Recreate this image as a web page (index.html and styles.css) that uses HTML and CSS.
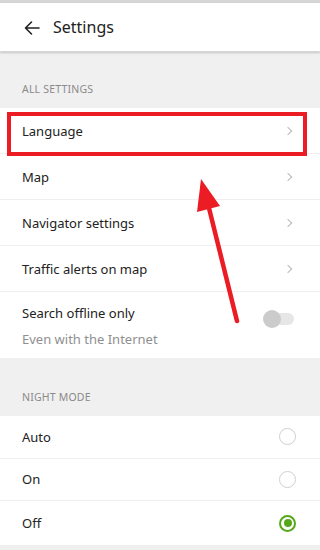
FILE: index.html
```html
<!DOCTYPE html>
<html>
<head>
<meta charset="utf-8">
<link rel="stylesheet" href="styles.css">
</head>
<body>
<div class="screen">
  <header class="topbar">
    <svg class="back" width="18" height="16" viewBox="0 0 18 16"><path d="M16 8H2.5M8.5 2L2.5 8l6 6" fill="none" stroke="#222" stroke-width="1.6" stroke-linecap="round" stroke-linejoin="round"/></svg>
    <span class="title">Settings</span>
  </header>

  <div class="section-head first">ALL SETTINGS</div>
  <div class="group">
    <div class="row"><span>Language</span><i class="chev"></i></div>
    <div class="row"><span>Map</span><i class="chev"></i></div>
    <div class="row"><span>Navigator settings</span><i class="chev"></i></div>
    <div class="row"><span>Traffic alerts on map</span><i class="chev"></i></div>
    <div class="row tall">
      <div class="texts">
        <span>Search offline only</span>
        <span class="sub">Even with the Internet</span>
      </div>
      <div class="toggle"><div class="knob"></div></div>
    </div>
  </div>

  <div class="section-head second">NIGHT MODE</div>
  <div class="group">
    <div class="row radio-row"><span>Auto</span><i class="radio"></i></div>
    <div class="row radio-row"><span>On</span><i class="radio"></i></div>
    <div class="row radio-row last"><span>Off</span><i class="radio on"></i></div>
  </div>

  <div class="highlight"></div>
  <svg class="arrow" width="320" height="550" viewBox="0 0 320 550">
    <line x1="237" y1="321" x2="207" y2="200" stroke="#ec1c24" stroke-width="4.5" stroke-linecap="round"/>
    <polygon points="201,179 197,212 220,206" fill="#ec1c24"/>
  </svg>
</div>
</body>
</html>
```
FILE: styles.css
```css
* { box-sizing: border-box; }
html, body { margin: 0; padding: 0; }
body {
  width: 320px;
  height: 550px;
  overflow: hidden;
  background: #f0f0f0;
  font-family: "Noto Sans", "Open Sans", sans-serif;
  color: #222;
}
.screen {
  position: relative;
  width: 320px;
  height: 550px;
  border-top: 3px solid #d6d6d6;
}
.topbar {
  height: 49px;
  background: #fff;
  display: flex;
  align-items: center;
  padding-left: 23px;
  box-shadow: 0 1px 2px rgba(0,0,0,0.18);
  border-bottom: 1px solid #d8d8d8;
  position: relative;
  z-index: 1;
}
.back { margin-right: 12px; margin-top: 2px; }
.title { font-size: 16px; color: #222; }
.section-head {
  font-size: 10.5px;
  color: #8a8a8a;
  letter-spacing: 0.2px;
  padding-left: 22px;
  display: flex;
  align-items: flex-end;
}
.section-head.first { height: 56px; padding-bottom: 12px; }
.section-head.second { height: 58px; padding-bottom: 12px; }
.group { background: #fff; }
.row {
  height: 46px;
  display: flex;
  align-items: center;
  justify-content: space-between;
  padding: 0 27px 0 22px;
  font-size: 13px;
  border-bottom: 1px solid #efefef;
}
.row.tall {
  height: 66px;
  align-items: flex-start;
  padding-top: 12px;
  border-bottom: none;
}
.texts { display: flex; flex-direction: column; }
.sub { color: #8f8f8f; margin-top: 8px; }
.chev {
  width: 6px; height: 6px;
  border-top: 1.3px solid #b8b8b8;
  border-right: 1.3px solid #b8b8b8;
  transform: rotate(45deg);
  margin-right: 2px;
}
.toggle {
  margin-top: 9px;
  width: 30px;
  height: 12px;
  border-radius: 6px;
  background: #e6e6e6;
  position: relative;
  margin-right: -1px;
}
.knob {
  position: absolute;
  left: -1px; top: -3px;
  width: 18px; height: 18px;
  border-radius: 50%;
  background: #cbcbcb;
}
.radio-row { height: 42.5px; padding-right: 24px; }
.radio-row.last { border-bottom: none; height: 44px; }
.radio {
  width: 17px; height: 17px;
  border-radius: 50%;
  border: 1.5px solid #cfcfcf;
  position: relative;
}
.radio.on { border: 2px solid #56a81a; }
.radio.on::after {
  content: "";
  position: absolute;
  left: 2.5px; top: 2.5px;
  width: 8px; height: 8px;
  border-radius: 50%;
  background: #56a81a;
}
.highlight {
  position: absolute;
  left: 7px; top: 109px;
  width: 300px; height: 44px;
  border: 4px solid #ec1c24;
  pointer-events: none;
}
.arrow { position: absolute; left: 0; top: -3px; pointer-events: none; }
```
